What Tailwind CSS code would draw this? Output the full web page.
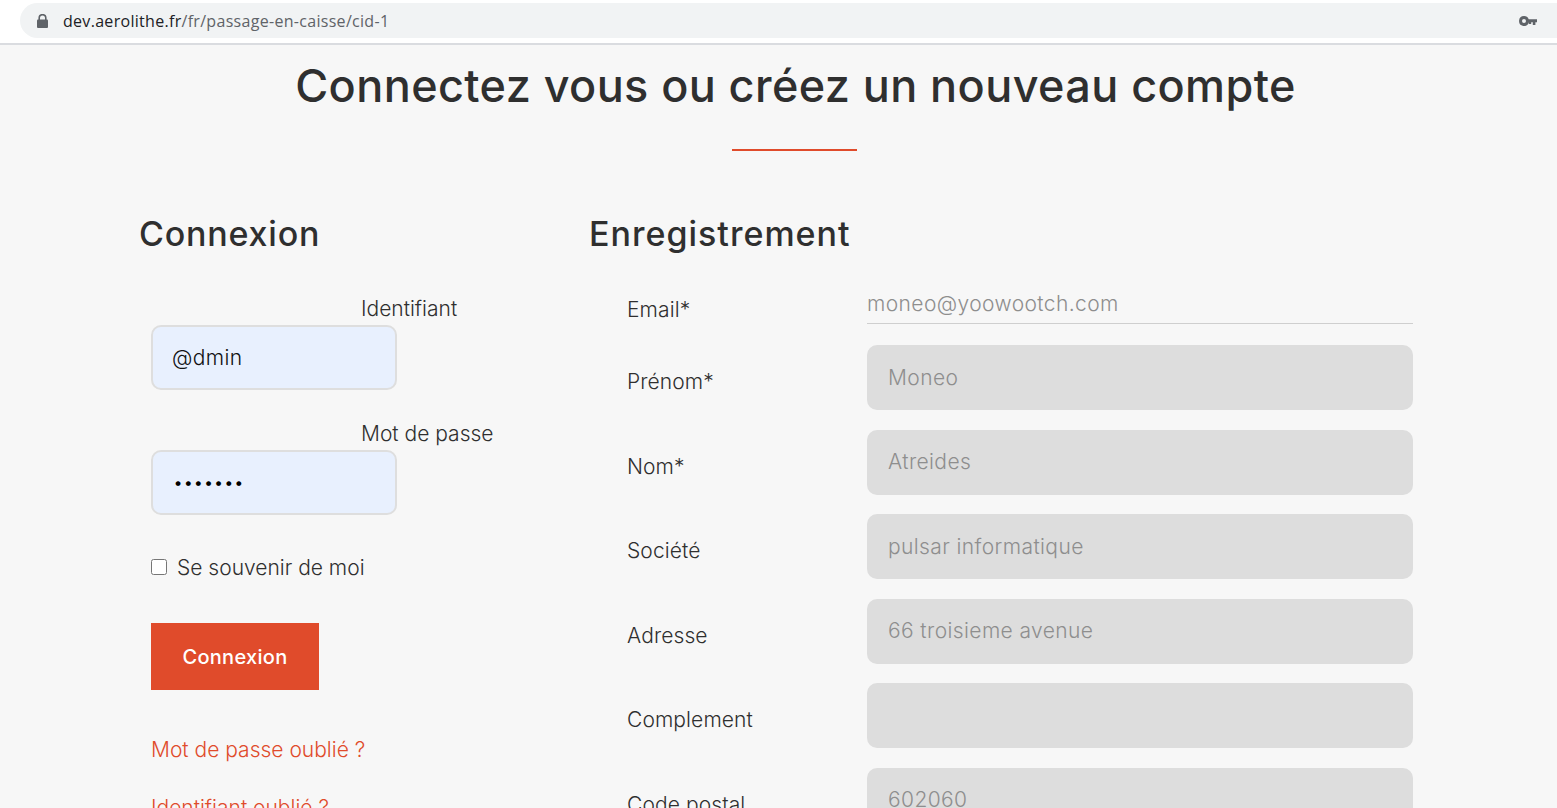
<!DOCTYPE html>
<html lang="fr">
<head>
  <meta charset="UTF-8" />
  <meta name="viewport" content="width=device-width, initial-scale=1" />
  <title>Connexion</title>
  <script src="https://cdn.jsdelivr.net/npm/@tailwindcss/browser@4"></script>
</head>
<body class="bg-[#f7f7f7] h-[808px] overflow-hidden font-['Inter',sans-serif] text-[#2f2f2f]">

<!-- Browser bar -->
<div class="h-[45px] bg-white border-b-2 border-[#dadce0] pt-[3px]">
  <div class="ml-[20px] h-[35px] bg-[#f1f3f4] rounded-l-full flex items-center pl-[17px] pr-[20px]">
    <svg class="w-[11px] h-[14px] mr-[15px]" viewBox="0 0 11 14" fill="#5f6368"><path d="M3 6V4a2.5 2.5 0 0 1 5 0v2H9.6V4a4.1 4.1 0 0 0-8.2 0v2z"/><rect x="0" y="5.5" width="11" height="8.5" rx="1"/></svg>
    <span class="font-['Open_Sans',sans-serif] text-[16px] tracking-[0.3px] text-[#202124]">dev.aerolithe.fr<span class="text-[#5f6368]">/fr/passage-en-caisse/cid-1</span></span>
    <svg class="ml-auto w-[18px] h-[10px]" viewBox="0 0 18 10" fill="#5f6368"><path fill-rule="evenodd" d="M5 0a5 5 0 0 1 4.7 3.2H18v3h-1.6V9h-2.6V6.2h-1.6V8H9.9V6.3A5 5 0 1 1 5 0zm0 3a2 2 0 1 0 0 4 2 2 0 0 0 0-4z"/></svg>
  </div>
</div>

<main>
  <h1 class="ml-[34px] text-center text-[45px] leading-[56px] mt-[13px] font-medium tracking-[0.4px]">Connectez vous ou créez un nouveau compte</h1>
  <div class="w-[125px] h-[2px] bg-[#e04b2b] ml-[732px] mt-[35px]"></div>

  <div class="flex mt-[60px] pl-[139px]">
    <!-- Connexion -->
    <section class="w-[450px] shrink-0">
      <h2 class="text-[34px] leading-[46px] font-medium tracking-[0.8px]">Connexion</h2>
      <form class="pl-[12px] mt-[41px] text-[21px] font-[350]">
        <label class="block pl-[210px] leading-[22px] h-[27px]">Identifiant</label>
        <input type="text" value="@dmin" class="block w-[246px] h-[65px] bg-[#e8f0fe] border-2 border-[#dedede] rounded-[10px] px-[19px] text-[#111] tracking-[0.4px]" />
        <label class="block pl-[210px] leading-[22px] h-[27px] mt-[33px]">Mot de passe</label>
        <input type="password" value="1234567" class="block w-[246px] h-[65px] bg-[#e8f0fe] border-2 border-[#dedede] rounded-[10px] px-[20px] text-[18px] text-black" />
        <div class="flex items-center mt-[39px] h-[28px]">
          <input type="checkbox" class="w-[16px] h-[16px] m-0 -translate-y-px" />
          <span class="ml-[10px]">Se souvenir de moi</span>
        </div>
        <button type="button" class="block mt-[41px] w-[168px] h-[67px] bg-[#e04b2b] text-white text-[20px] font-medium tracking-[0.3px]">Connexion</button>
        <a class="block mt-[46px] leading-[28px] text-[#e04b2b]">Mot de passe oublié ?</a>
        <a class="block mt-[30px] leading-[28px] text-[#e04b2b]">Identifiant oublié ?</a>
      </form>
    </section>

    <!-- Enregistrement -->
    <section class="w-[824px]">
      <h2 class="text-[34px] leading-[46px] font-medium tracking-[1px]">Enregistrement</h2>
      <form class="pl-[38px] mt-[24px] text-[21px] font-[350] tracking-[0.1px]">
        <div class="flex h-[43px]">
          <label class="w-[240px] mt-[15px] leading-[28px]">Email*</label>
          <input type="text" disabled value="moneo@yoowootch.com" class="w-[546px] h-[43px] pt-[3px] bg-transparent border-b border-[#cfcfcf] text-[#8e8e8e] tracking-[0.4px]" />
        </div>
        <div class="flex flex-col gap-[19.5px] mt-[21px]">
          <div class="flex h-[65px]">
            <label class="w-[240px] mt-[23px] leading-[28px]">Prénom*</label>
            <input type="text" disabled value="Moneo" class="w-[546px] bg-[#dddddd] rounded-[10px] px-[21px] text-[#8e8e8e] tracking-[0.4px]" />
          </div>
          <div class="flex h-[65px]">
            <label class="w-[240px] mt-[23px] leading-[28px]">Nom*</label>
            <input type="text" disabled value="Atreides" class="w-[546px] bg-[#dddddd] rounded-[10px] px-[21px] text-[#8e8e8e] tracking-[0.4px]" />
          </div>
          <div class="flex h-[65px]">
            <label class="w-[240px] mt-[23px] leading-[28px]">Société</label>
            <input type="text" disabled value="pulsar informatique" class="w-[546px] bg-[#dddddd] rounded-[10px] px-[21px] text-[#8e8e8e] tracking-[0.4px]" />
          </div>
          <div class="flex h-[65px]">
            <label class="w-[240px] mt-[23px] leading-[28px]">Adresse</label>
            <input type="text" disabled value="66 troisieme avenue" class="w-[546px] bg-[#dddddd] rounded-[10px] px-[21px] text-[#8e8e8e] tracking-[0.4px]" />
          </div>
          <div class="flex h-[65px]">
            <label class="w-[240px] mt-[23px] leading-[28px]">Complement</label>
            <input type="text" disabled value="" class="w-[546px] bg-[#dddddd] rounded-[10px] px-[21px] text-[#8e8e8e]" />
          </div>
          <div class="flex h-[65px]">
            <label class="w-[240px] mt-[23px] leading-[28px]">Code postal</label>
            <input type="text" disabled value="602060" class="w-[546px] bg-[#dddddd] rounded-[10px] px-[21px] text-[#8e8e8e] tracking-[0.4px]" />
          </div>
        </div>
      </form>
    </section>
  </div>
</main>
</body>
</html>
